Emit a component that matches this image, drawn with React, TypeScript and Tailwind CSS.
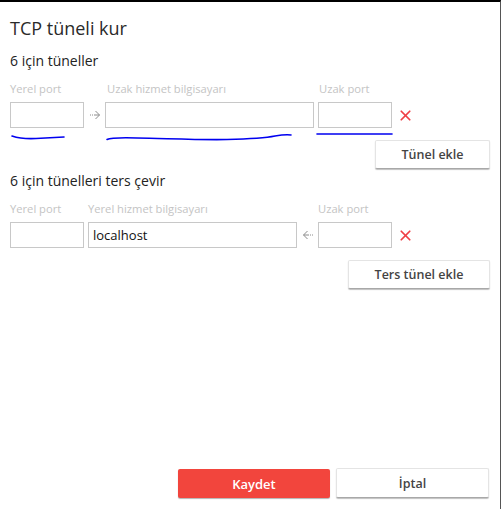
import { X } from 'lucide-react'

const labelClass = 'block text-[11.2px] leading-[16px] text-[#c4c4c4]'
const inputClass =
  'h-[26px] border border-[#c8c8c8] bg-white px-[4px] text-[13px] text-[#111] outline-none block'
const buttonClass =
  'rounded-[2px] border border-[#e4e4e4] border-b-[#a8a8a8] bg-white pt-px text-[12.5px] font-semibold text-[#444] shadow-[0_1px_1px_rgba(0,0,0,0.25)]'

function ArrowIcon({ dir }: { dir: 'left' | 'right' }) {
  return (
    <svg
      width="10"
      height="10"
      viewBox="0 0 10 10"
      fill="none"
      stroke="#8c8c8c"
      strokeWidth="1"
      className={dir === 'left' ? 'rotate-180' : ''}
    >
      <path d="M0 5h1M2 5h1M4 5h5.5M5.5 1l4 4-4 4" />
    </svg>
  )
}

function RemoveIcon() {
  return <X className="h-[17px] w-[17px] text-[#ef3f45]" strokeWidth={2.4} />
}

export default function App() {
  return (
    <div
      className="relative h-[509px] w-[501px] overflow-hidden border-t-2 border-r border-t-black border-r-[#555] bg-white pl-[10px] text-[#222]"
      style={{ fontFamily: '"Open Sans", "Noto Sans", sans-serif' }}
    >
      <h1 className="pt-[13px] text-[18px] leading-[26px] text-[#2a2a2a]">TCP tüneli kur</h1>

      {/* Tunnels */}
      <h2 className="mt-[10px] text-[14px] leading-[20px]">6 için tüneller</h2>
      <div className="mt-[10px] flex">
        <div className="w-[74px]">
          <label className={labelClass}>Yerel port</label>
          <input className={`${inputClass} mt-[5px] w-[74px]`} />
        </div>
        <div className="flex w-[21px] items-end justify-center pb-[8px]">
          <ArrowIcon dir="right" />
        </div>
        <div className="w-[209px]">
          <label className={`${labelClass} pl-[2px]`}>Uzak hizmet bilgisayarı</label>
          <input className={`${inputClass} mt-[5px] w-[209px]`} />
        </div>
        <div className="ml-[4px] w-[74px]">
          <label className={`${labelClass} pl-[1px]`}>Uzak port</label>
          <input className={`${inputClass} mt-[5px] w-[74px]`} />
        </div>
        <div className="flex w-[26px] items-end justify-center pb-[4.5px]">
          <RemoveIcon />
        </div>
      </div>
      <div className="mt-[12px] flex justify-end pr-[10px]">
        <button className={`${buttonClass} h-[29px] w-[115px]`}>Tünel ekle</button>
      </div>

      {/* Reverse tunnels */}
      <h2 className="mt-[2px] text-[14px] leading-[20px]">6 için tünelleri ters çevir</h2>
      <div className="mt-[10px] flex">
        <div className="w-[78px]">
          <label className={labelClass}>Yerel port</label>
          <input className={`${inputClass} mt-[5px] w-[74px]`} />
        </div>
        <div className="w-[209px]">
          <label className={labelClass}>Yerel hizmet bilgisayarı</label>
          <input className={`${inputClass} mt-[5px] w-[209px]`} defaultValue="localhost" />
        </div>
        <div className="flex w-[21px] items-end justify-center pb-[8px]">
          <ArrowIcon dir="left" />
        </div>
        <div className="w-[74px]">
          <label className={labelClass}>Uzak port</label>
          <input className={`${inputClass} mt-[5px] w-[74px]`} />
        </div>
        <div className="flex w-[26px] items-end justify-center pb-[4.5px]">
          <RemoveIcon />
        </div>
      </div>
      <div className="mt-[12px] flex justify-end pr-[10px]">
        <button className={`${buttonClass} h-[29px] w-[142px]`}>Ters tünel ekle</button>
      </div>

      {/* Footer */}
      <div className="mt-[180px] flex justify-end gap-[6px] pr-[11px]">
        <button className="h-[29px] w-[152px] rounded-[2px] bg-[#f2453d] pt-[2px] text-[13px] font-semibold text-white shadow-[0_1px_1px_rgba(0,0,0,0.3)]">
          Kaydet
        </button>
        <button className={`${buttonClass} h-[30px] -mt-px w-[153px] !pt-[3px]`}>İptal</button>
      </div>

      {/* hand-drawn pen marks over the screenshot */}
      <svg
        className="absolute left-0 top-[-2px]"
        width="501"
        height="150"
        fill="none"
        stroke="#0000f0"
        strokeWidth="1.6"
        strokeLinecap="round"
      >
        <path d="M12 136c6 2 14 3 24 2.5s18-1 28-1.5" />
        <path d="M107 139.5c4-2 12-2 30-1.5 30 .5 60 2 90 1.5 20-.5 36-1 48-3.5 6-1 12-1.5 16-1" />
        <path d="M317 134h75" />
      </svg>
    </div>
  )
}
